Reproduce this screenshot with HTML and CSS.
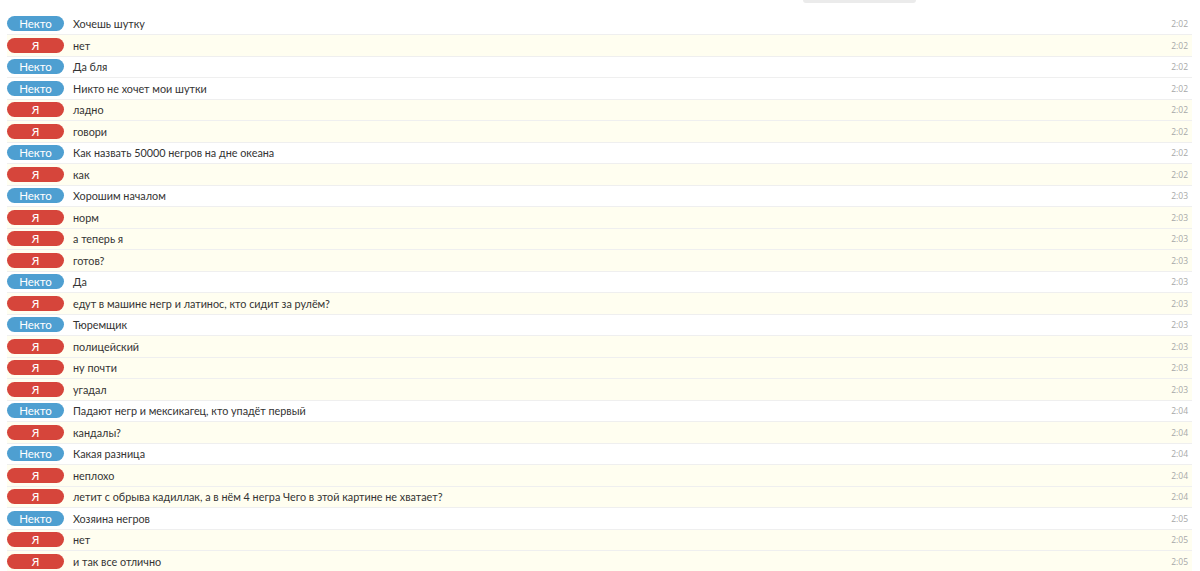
FILE: index.html
```html
<!DOCTYPE html>
<html lang="ru">
<head>
<meta charset="utf-8">
<link rel="stylesheet" href="styles.css">
</head>
<body>
<div class="more"></div>
<div class="log">
  <div class="row them"><span class="badge">Некто</span><span class="msg">Хочешь шутку</span><span class="time">2:02</span></div>
  <div class="row me"><span class="badge">Я</span><span class="msg">нет</span><span class="time">2:02</span></div>
  <div class="row them"><span class="badge">Некто</span><span class="msg">Да бля</span><span class="time">2:02</span></div>
  <div class="row them"><span class="badge">Некто</span><span class="msg">Никто не хочет мои шутки</span><span class="time">2:02</span></div>
  <div class="row me"><span class="badge">Я</span><span class="msg">ладно</span><span class="time">2:02</span></div>
  <div class="row me"><span class="badge">Я</span><span class="msg">говори</span><span class="time">2:02</span></div>
  <div class="row them"><span class="badge">Некто</span><span class="msg">Как назвать 50000 негров на дне океана</span><span class="time">2:02</span></div>
  <div class="row me"><span class="badge">Я</span><span class="msg">как</span><span class="time">2:02</span></div>
  <div class="row them"><span class="badge">Некто</span><span class="msg">Хорошим началом</span><span class="time">2:03</span></div>
  <div class="row me"><span class="badge">Я</span><span class="msg">норм</span><span class="time">2:03</span></div>
  <div class="row me"><span class="badge">Я</span><span class="msg">а теперь я</span><span class="time">2:03</span></div>
  <div class="row me"><span class="badge">Я</span><span class="msg">готов?</span><span class="time">2:03</span></div>
  <div class="row them"><span class="badge">Некто</span><span class="msg">Да</span><span class="time">2:03</span></div>
  <div class="row me"><span class="badge">Я</span><span class="msg">едут в машине негр и латинос, кто сидит за рулём?</span><span class="time">2:03</span></div>
  <div class="row them"><span class="badge">Некто</span><span class="msg">Тюремщик</span><span class="time">2:03</span></div>
  <div class="row me"><span class="badge">Я</span><span class="msg">полицейский</span><span class="time">2:03</span></div>
  <div class="row me"><span class="badge">Я</span><span class="msg">ну почти</span><span class="time">2:03</span></div>
  <div class="row me"><span class="badge">Я</span><span class="msg">угадал</span><span class="time">2:03</span></div>
  <div class="row them"><span class="badge">Некто</span><span class="msg">Падают негр и мексикагец, кто упадёт первый</span><span class="time">2:04</span></div>
  <div class="row me"><span class="badge">Я</span><span class="msg">кандалы?</span><span class="time">2:04</span></div>
  <div class="row them"><span class="badge">Некто</span><span class="msg">Какая разница</span><span class="time">2:04</span></div>
  <div class="row me"><span class="badge">Я</span><span class="msg">неплохо</span><span class="time">2:04</span></div>
  <div class="row me"><span class="badge">Я</span><span class="msg">летит с обрыва кадиллак, а в нём 4 негра Чего в этой картине не хватает?</span><span class="time">2:04</span></div>
  <div class="row them"><span class="badge">Некто</span><span class="msg">Хозяина негров</span><span class="time">2:05</span></div>
  <div class="row me"><span class="badge">Я</span><span class="msg">нет</span><span class="time">2:05</span></div>
  <div class="row me"><span class="badge">Я</span><span class="msg">и так все отлично</span><span class="time">2:05</span></div>
</div>
</body>
</html>
```
FILE: styles.css
```css
html, body {
  margin: 0;
  padding: 0;
  background: #ffffff;
  overflow: hidden;
}
body {
  font-family: "Lato", "Open Sans", "DejaVu Sans", sans-serif;
  color: #333333;
  position: relative;
  height: 571px;
}
.more {
  position: absolute;
  left: 803px;
  top: 0;
  width: 113px;
  height: 3px;
  background: #ebebeb;
  border-radius: 0 0 5px 5px;
}
.log {
  padding-top: 13.5px;
  margin: 0 8px 0 7px;
}
.row {
  display: flex;
  align-items: center;
  height: 20.5px;
  border-bottom: 1px solid #efefef;
}
.row.me {
  background: #fffef0;
}
.badge {
  flex: 0 0 57px;
  height: 15px;
  line-height: 15px;
  border-radius: 8px;
  color: #ffffff;
  font-size: 11.5px;
  text-align: center;
  margin-right: 9px;
}
.them .badge {
  background: #4e9fd1;
}
.me .badge {
  background: #d6453b;
}
.msg {
  flex: 1;
  font-size: 10.8px;
  white-space: nowrap;
}
.time {
  font-family: "Open Sans", sans-serif;
  font-size: 8.5px;
  color: #a8a8a8;
  padding-right: 4px;
}
```
